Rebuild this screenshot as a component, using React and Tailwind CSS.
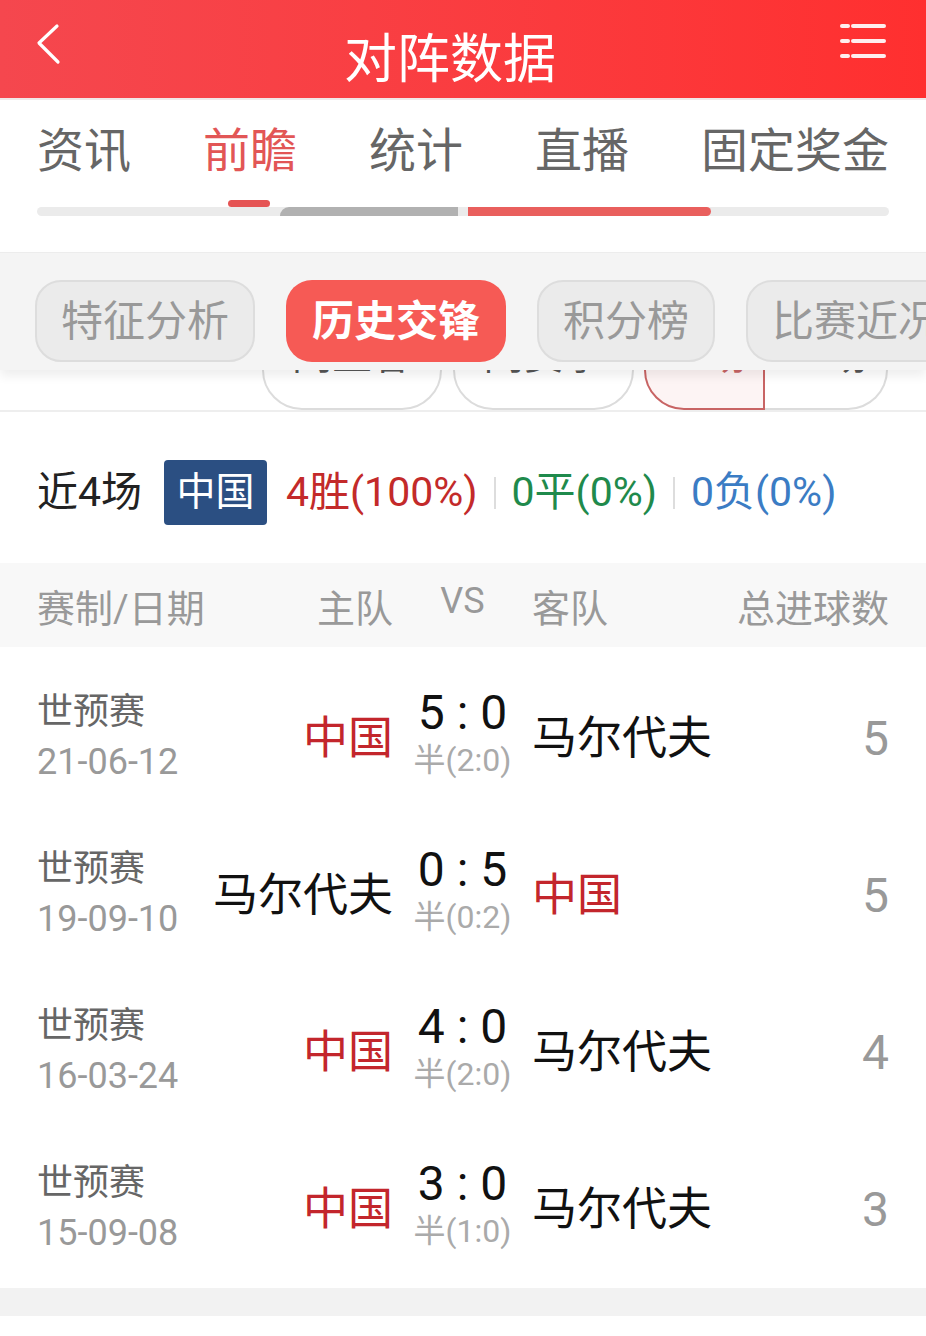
const font = "font-['Roboto','Noto_Sans_CJK_SC',sans-serif]"

const tabs = [
  { name: "资讯" },
  { name: "前瞻", active: true },
  { name: "统计" },
  { name: "直播" },
  { name: "固定奖金" },
]

const pills = [
  { name: "特征分析", w: "w-[220px]" },
  { name: "历史交锋", w: "w-[220px]", active: true },
  { name: "积分榜", w: "w-[178px]" },
  { name: "比赛近况", w: "w-[220px]" },
]

const matches = [
  { league: "世预赛", date: "21-06-12", home: "中国", away: "马尔代夫", score: "5 : 0", half: "(2:0)", total: "5", homeRed: true },
  { league: "世预赛", date: "19-09-10", home: "马尔代夫", away: "中国", score: "0 : 5", half: "(0:2)", total: "5", homeRed: false },
  { league: "世预赛", date: "16-03-24", home: "中国", away: "马尔代夫", score: "4 : 0", half: "(2:0)", total: "4", homeRed: true },
  { league: "世预赛", date: "15-09-08", home: "中国", away: "马尔代夫", score: "3 : 0", half: "(1:0)", total: "3", homeRed: true },
]

export default function App() {
  return (
    <div className={`w-[926px] h-[1336px] bg-white overflow-hidden ${font}`}>
      {/* Header */}
      <div className="h-[98px] bg-gradient-to-r from-[#f5474e] to-[#ff2f2f] grid grid-cols-[120px_1fr_120px]">
        <div className="pl-[34px] pt-[22px]">
          <svg width="30" height="46" viewBox="0 0 30 46" fill="none">
            <path d="M23 4 L5 21 L24 40" stroke="white" strokeWidth="3.2" strokeLinecap="round" strokeLinejoin="round" />
          </svg>
        </div>
        <div className="text-center text-white text-[53px] leading-none pt-[34px] pr-[26px]">对阵数据</div>
        <div className="flex justify-end pr-[38px] pt-[22px]">
          <svg width="50" height="40" viewBox="0 0 50 40" fill="none">
            <g stroke="white" strokeWidth="4" strokeLinecap="round" opacity="0.92">
              <path d="M4 4 H10" />
              <path d="M15 4 H46" />
              <path d="M4 19 H10" />
              <path d="M15 19 H46" />
              <path d="M4 34 H10" />
              <path d="M15 34 H46" />
            </g>
          </svg>
        </div>
      </div>
      <div className="h-[2px] bg-[#f0e8e8]" />

      {/* Tabs */}
      <div className="h-[152px] pt-[26px]">
        <div className="flex justify-between px-[37px]">
          {tabs.map((t) => (
            <span
              key={t.name}
              className={`text-[47px] leading-[50px] ${t.active ? "text-[#e25656]" : "text-[#666666]"}`}
            >
              {t.name}
            </span>
          ))}
        </div>
        <div className="relative mt-[31px] mx-[37px] h-[9px] rounded-full bg-[#ebebeb] flex">
          <div className="absolute -top-[7px] left-[191px] w-[42px] h-[7px] rounded-full bg-[#e55454]" />
          <div className="ml-[243px] w-[178px] h-full bg-[#b1b1b1] rounded-tl-[9px]" />
          <div className="ml-[10px] w-[243px] h-full bg-[#e95f5d] rounded-r-full" />
        </div>
      </div>

      {/* Sub tabs */}
      <div className="relative z-10 h-[118px] bg-[#f4f4f4] border-t border-[#ececec] shadow-[0_6px_10px_rgba(0,0,0,0.07)] flex gap-[31px] pl-[35px] pt-[27px] overflow-hidden">
        {pills.map((p) => (
          <div
            key={p.name}
            className={`${p.w} h-[82px] shrink-0 rounded-[26px] flex items-center justify-center text-[42px] whitespace-nowrap ${
              p.active
                ? "bg-[#f65a55] text-white font-bold"
                : "bg-[#ebebeb] border-2 border-[#dddddd] text-[#999999]"
            }`}
          >
            {p.name}
          </div>
        ))}
      </div>
      <div className="h-[40px] flex items-end overflow-hidden pl-[262px] text-[40px] leading-none text-[#555]">
        <div className="w-[180px] h-[82px] shrink-0 rounded-[40px] border-2 border-[#dcdcdc] flex items-start justify-center pt-[6px]">同主客</div>
        <div className="ml-[11px] w-[181px] h-[82px] shrink-0 rounded-[40px] border-2 border-[#dcdcdc] flex items-start justify-center pt-[6px]">同赛事</div>
        <div className="ml-[10px] w-[121px] h-[82px] shrink-0 rounded-l-[40px] border-2 border-[#c86464] bg-[#fdf4f4] text-[#c86464] flex items-start justify-center pt-[6px]">10场</div>
        <div className="w-[123px] h-[82px] shrink-0 rounded-r-[40px] border-2 border-l-0 border-[#dcdcdc] flex items-start justify-center pt-[6px]">20场</div>
      </div>
      <div className="h-[2px] bg-[#eeeeee]" />

      {/* Stats */}
      <div className="h-[151px] flex items-center pl-[37px] pt-[10px] text-[41px]">
        <span className="text-[#222222]">近4场</span>
        <span className="ml-[22px] w-[103px] h-[65px] rounded-[4px] bg-[#2b4f82] text-white text-[39px] flex items-center justify-center">中国</span>
        <span className="ml-[19px] text-[#c32a2a]">4胜(100%)</span>
        <span className="mx-[16px] w-[2px] h-[32px] bg-[#dddddd]" />
        <span className="text-[#1f8a4c]">0平(0%)</span>
        <span className="mx-[16px] w-[2px] h-[32px] bg-[#dddddd]" />
        <span className="text-[#3b7cc4]">0负(0%)</span>
      </div>

      {/* Table header */}
      <div className="h-[84px] bg-[#f8f8f8] flex items-center px-[37px] pt-[8px] text-[38px] text-[#999999]">
        <span className="w-[160px] whitespace-nowrap">赛制/日期</span>
        <span className="w-[196px] text-right">主队</span>
        <span className="w-[139px] text-center text-[36px] -mt-[16px]">VS</span>
        <span className="flex-1">客队</span>
        <span>总进球数</span>
      </div>

      {/* Rows */}
      <div className="pt-[13px]">
        {matches.map((m, i) => (
          <div key={i} className="h-[157px] flex items-center px-[37px]">
            <div className="w-[160px] flex flex-col whitespace-nowrap">
              <span className="text-[36px] leading-[52px] text-[#666666] -mt-[4px]">{m.league}</span>
              <span className="text-[36px] leading-[52px] text-[#999999] -mt-[2px]">{m.date}</span>
            </div>
            <div className={`w-[196px] flex justify-end whitespace-nowrap text-[45px] ${m.homeRed ? "text-[#c3262c]" : "text-[#111111]"}`}>
              {m.home}
            </div>
            <div className="w-[139px] flex flex-col items-center whitespace-nowrap">
              <span className="text-[48px] leading-[50px] text-[#111111] -mt-[8px]">{m.score}</span>
              <span className="text-[32px] leading-[44px] text-[#aaaaaa]">半{m.half}</span>
            </div>
            <div className={`flex-1 whitespace-nowrap text-[45px] ${m.homeRed ? "text-[#111111]" : "text-[#c3262c]"}`}>
              {m.away}
            </div>
            <div className="text-[48px] text-[#999999]">{m.total}</div>
          </div>
        ))}
      </div>

      <div className="h-[28px] bg-[#f2f2f2]" />
    </div>
  )
}
